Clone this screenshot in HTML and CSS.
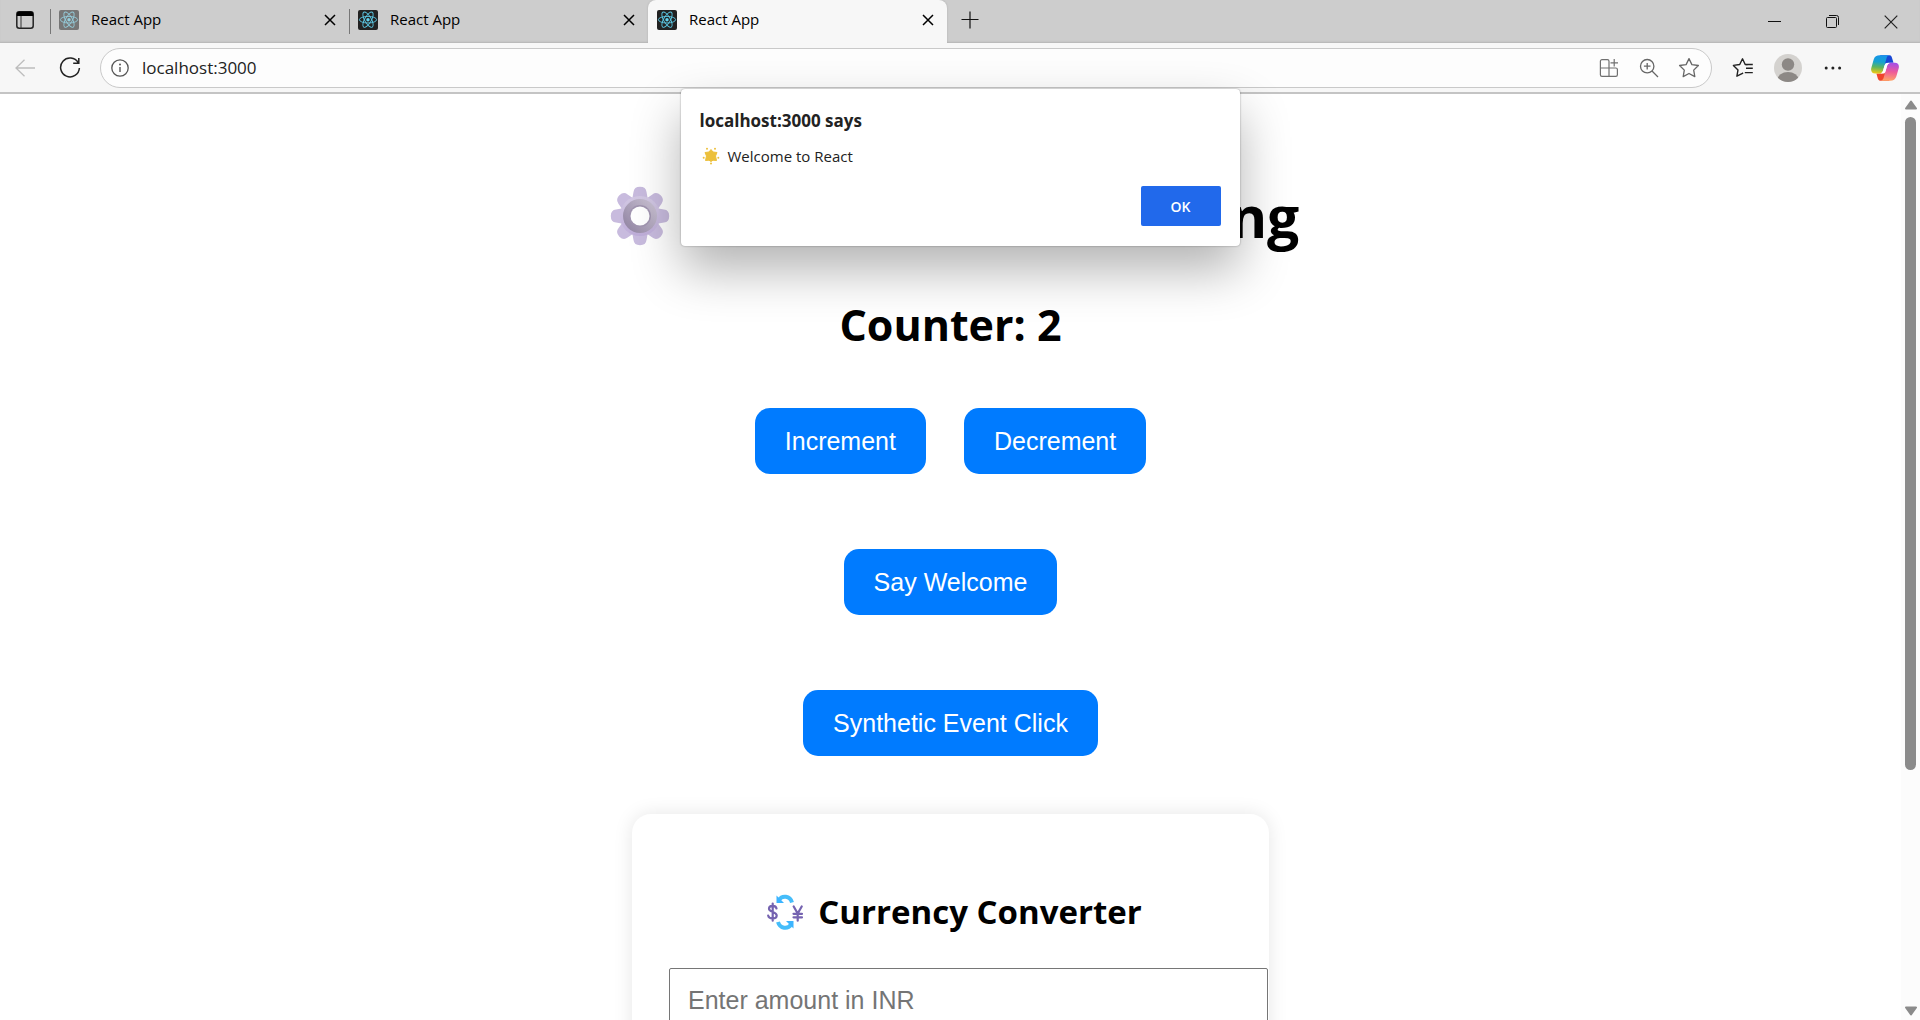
FILE: index.html
```html
<!DOCTYPE html>
<html lang="en">
<head>
<meta charset="utf-8">
<title>React App</title>
<link rel="stylesheet" href="styles.css">
</head>
<body>
<svg class="defs" aria-hidden="true">
  <symbol id="react" viewBox="0 0 20 20">
    <rect class="react-bg" width="20" height="20" rx="2"/>
    <g fill="none" stroke="#5cc8e4" stroke-width="0.9">
      <ellipse cx="10" cy="9.7" rx="8.6" ry="3.3"/>
      <ellipse cx="10" cy="9.7" rx="8.6" ry="3.3" transform="rotate(60 10 9.7)"/>
      <ellipse cx="10" cy="9.7" rx="8.6" ry="3.3" transform="rotate(120 10 9.7)"/>
    </g>
    <circle cx="10" cy="9.7" r="1.7" fill="#5fd3f0"/>
  </symbol>
  <symbol id="close" viewBox="0 0 12 12"><path d="M1 1l10 10M11 1L1 11" fill="none" stroke="currentColor" stroke-width="1.5"/></symbol>
</svg>

<header class="browser">
  <div class="tabstrip">
    <button class="icon-btn workspace" aria-label="Tab actions">
      <svg width="18" height="18" viewBox="0 0 18 18"><rect x="0.8" y="0.8" width="16.4" height="16.4" rx="2.5" fill="none" stroke="#222" stroke-width="1.5"/><path d="M0.8 5V3a2.4 2.4 0 0 1 2.4-2.4h11.6A2.4 2.4 0 0 1 17.2 3v2z" fill="#000"/><path d="M5 5v12" stroke="#333" stroke-width="1"/></svg>
    </button>
    <div class="tabs">
      <div class="tab sleeping"><svg class="favicon"><use href="#react"/></svg><span>React App</span><button class="icon-btn" aria-label="Close tab"><svg width="12" height="12"><use href="#close"/></svg></button></div>
      <div class="tab"><svg class="favicon"><use href="#react"/></svg><span>React App</span><button class="icon-btn" aria-label="Close tab"><svg width="12" height="12"><use href="#close"/></svg></button></div>
      <div class="tab active"><svg class="favicon"><use href="#react"/></svg><span>React App</span><button class="icon-btn" aria-label="Close tab"><svg width="12" height="12"><use href="#close"/></svg></button></div>
    </div>
    <button class="icon-btn new-tab" aria-label="New tab"><svg width="18" height="18" viewBox="0 0 18 18"><path d="M9 0.500v17M0.500 8.500h17" stroke="#111" stroke-width="1.200"/></svg></button>
    <div class="window-controls">
      <button class="icon-btn" aria-label="Minimize"><svg width="14" height="14" viewBox="0 0 14 14"><path d="M0 6.500h13" stroke="#111"/></svg></button>
      <button class="icon-btn" aria-label="Restore"><svg width="14" height="14" viewBox="0 0 14 14"><g fill="none" stroke="#111"><rect x="0.500" y="2.500" width="10" height="10" rx="1"/><path d="M3 0.500h7.500a2 2 0 0 1 2 2V10"/></g></svg></button>
      <button class="icon-btn" aria-label="Close window"><svg width="14" height="14" viewBox="0 0 14 14"><path d="M0.700 0.700l12.600 12.600M13.300 0.700L0.700 13.300" stroke="#222" stroke-width="1.200"/></svg></button>
    </div>
  </div>

  <div class="toolbar">
    <button class="icon-btn back" aria-label="Back" disabled><svg width="20" height="18" viewBox="0 0 20 18"><path d="M20 9H1M9.500 0.700L1 9l8.500 8.300" fill="none" stroke="#bdbdbd" stroke-width="1.300"/></svg></button>
    <button class="icon-btn reload" aria-label="Refresh"><svg width="22" height="22" viewBox="0 0 22 22"><path d="M19.200 5.800A9.400 9.400 0 1 0 20.400 11M19.800 1v5.200h-5.600" fill="none" stroke="#222" stroke-width="1.500"/></svg></button>
    <div class="address">
      <svg width="18" height="18" viewBox="0 0 18 18"><circle cx="9" cy="9" r="8.200" fill="none" stroke="#555" stroke-width="1.300"/><path d="M9 8v5" stroke="#555" stroke-width="1.400"/><circle cx="9" cy="5.500" r="1" fill="#555"/></svg>
      <input class="url" type="text" aria-label="Address" value="localhost:3000">
      <button class="icon-btn" aria-label="Install app"><svg width="20" height="20" viewBox="0 0 20 20"><g fill="none" stroke="#707070" stroke-width="1.200"><path d="M10 18.400H3a1.600 1.600 0 0 1-1.600-1.600V3.200A1.600 1.600 0 0 1 3 1.600h5.400A1.600 1.600 0 0 1 10 3.200zM1.400 10h15.400a1.600 1.600 0 0 1 1.600 1.600v5.200a1.600 1.600 0 0 1-1.600 1.600H10M15.200 1v7.600M11.500 4.800h7.500"/></g></svg></button>
      <button class="icon-btn" aria-label="Zoom"><svg width="20" height="20" viewBox="0 0 20 20"><g fill="none" stroke="#666" stroke-width="1.300"><circle cx="8.200" cy="8.200" r="6.700"/><path d="M13 13l6 6M8.200 4.900v6.600M4.900 8.200h6.600"/></g></svg></button>
      <button class="icon-btn" aria-label="Add to favorites"><svg width="22" height="22" viewBox="0 0 22 22"><path d="M11 1.600l2.900 6 6.500.9-4.700 4.600 1.100 6.500L11 16.500l-5.800 3.100 1.100-6.500L1.600 8.500l6.500-.9z" fill="none" stroke="#666" stroke-width="1.300" stroke-linejoin="round"/></svg></button>
    </div>
    <div class="tools">
      <button class="icon-btn" aria-label="Favorites"><svg width="22" height="22" viewBox="0 0 22 22"><path d="M15.500 7.800L13.200 7.500 10.500 1.800 7.700 7.500l-6.300.9 4.600 4.500-1.100 6.300 5.600-2.900.6-.4M13 7.500h7.800M14 11.200h6.800M12.800 15.600h8" fill="none" stroke="#222" stroke-width="1.400" stroke-linejoin="round"/></svg></button>
      <button class="icon-btn" aria-label="Profile"><svg width="28" height="28" viewBox="0 0 28 28"><defs><clipPath id="face"><circle cx="14" cy="14" r="14"/></clipPath></defs><circle cx="14" cy="14" r="14" fill="#d4d2cf"/><g fill="#8c8885" clip-path="url(#face)"><circle cx="14" cy="10.500" r="6.200"/><ellipse cx="14" cy="25.500" rx="10.500" ry="7.500"/></g></svg></button>
      <button class="icon-btn" aria-label="Settings and more"><svg width="18" height="4" viewBox="0 0 18 4"><g fill="#222"><circle cx="2.200" cy="2" r="1.500"/><circle cx="8.900" cy="2" r="1.500"/><circle cx="15.600" cy="2" r="1.500"/></g></svg></button>
      <button class="icon-btn copilot" aria-label="Copilot"><svg width="28" height="26" viewBox="0 0 28 26">
        <defs>
          <linearGradient id="cpA" x1="0.400" y1="0" x2="0.300" y2="1"><stop offset="0" stop-color="#1795ea"/><stop offset="0.350" stop-color="#16a2d0"/><stop offset="0.650" stop-color="#5db55e"/><stop offset="1" stop-color="#f2c811"/></linearGradient>
          <linearGradient id="cpB" x1="0.600" y1="0" x2="0.500" y2="1"><stop offset="0" stop-color="#a24ee8"/><stop offset="0.500" stop-color="#ee5a9a"/><stop offset="1" stop-color="#ffa468"/></linearGradient>
        </defs>
        <path d="M9 0.300h9.500c1.800 0 2.200 1.500 2.700 3.200l1.300 4.300h-5.200c-2 0-3 1.200-3.700 3z" fill="#1947d4"/>
        <path d="M18.500 25.700H9.300c-1.700 0-2.200-1.300-2.700-2.900L5.400 18.500h4.800c2 0 3-1.200 3.600-3z" fill="#f0442c"/>
        <path d="M8.800 0.300h9.400c-1.600.3-2.200 1.500-2.800 3.400L12.200 15c-.6 2-1.600 3.500-4 3.500H4.300c-3.300 0-4.800-2.400-4-5.600l2.400-8.400C3.600 1.700 5.600.3 8.800.3z" fill="url(#cpA)"/>
        <path d="M19.200 25.700H10c1.500-.3 2.200-1.500 2.700-3.200L15.900 11.200c.6-2 1.700-3.400 4-3.400h3.900c3.200 0 4.700 2.300 3.900 5.400l-2.400 8.300c-.9 2.800-2.900 4.200-6.100 4.200z" fill="url(#cpB)"/>
        <path d="M15.900 8h3.100c-1.700.5-2.600 1.700-3.100 3.400l-1.600 5.500c-.4 1-1 1.600-2.300 1.600H9.600c1.400-.5 2.100-1.700 2.600-3.300l1.500-5.200c.4-1.200 1-2 2.200-2z" fill="#fff"/>
      </svg></button>
    </div>
  </div>
</header>

<div class="viewport">
  <main class="page">
    <h1><svg class="gear" viewBox="0 0 60 60" aria-hidden="true">
      <defs>
        <linearGradient id="gearBody" gradientUnits="userSpaceOnUse" x1="33" y1="0" x2="27" y2="60"><stop offset="0" stop-color="#d8d0e6"/><stop offset="1" stop-color="#b9a6d6"/></linearGradient>
        <linearGradient id="gearRing" x1="1" y1="0.100" x2="0" y2="0.900"><stop offset="0" stop-color="#cdc5d6"/><stop offset="1" stop-color="#8f82a0"/></linearGradient>
        <path id="tooth" d="M21 20L23.500 6Q24 .8 30 .8T36.500 6l2.500 14z"/>
      </defs>
      <g fill="#c8bbde">
        <use href="#tooth"/><use href="#tooth" transform="rotate(45 30 30)"/><use href="#tooth" transform="rotate(90 30 30)"/><use href="#tooth" transform="rotate(135 30 30)"/><use href="#tooth" transform="rotate(180 30 30)"/><use href="#tooth" transform="rotate(225 30 30)"/><use href="#tooth" transform="rotate(270 30 30)"/><use href="#tooth" transform="rotate(315 30 30)"/>
      </g>
      <circle cx="30" cy="30" r="20" fill="url(#gearBody)"/>
      <circle cx="30" cy="30" r="17" fill="url(#gearRing)"/>
      <circle cx="30" cy="30" r="11" fill="#a195b0"/>
      <circle cx="30" cy="30" r="9.500" fill="#fff"/>
    </svg>React Event Handling</h1>
    <h2>Counter: 2</h2>
    <div class="actions">
      <button class="btn">Increment</button>
      <button class="btn">Decrement</button>
    </div>
    <div class="actions"><button class="btn">Say Welcome</button></div>
    <div class="actions"><button class="btn">Synthetic Event Click</button></div>
    <section class="card">
      <h3><svg class="exchange" viewBox="0 0 36 36" aria-hidden="true">
        <g fill="none" stroke="#45bdfa" stroke-width="4">
          <path d="M25 8.500C23 1.500 15 1 12 6"/>
          <path d="M11 28c2 7 10 7.500 13 2.500"/>
        </g>
        <path d="M9.500 1.500v7.500h7.500z" fill="#3cb4ff"/><path d="M26.500 34.500V27H19z" fill="#3cb4ff"/>
        <g fill="none" stroke="#7563b0" stroke-width="2.200" stroke-linecap="round">
          <path d="M9.500 14.500C8.800 11 2 11 2 14.800c0 3.700 7.700 2.600 7.700 6.700 0 4-7.700 4-8.500.1M5.700 9.500v17.200"/>
          <path d="M26.700 12.500l4 7 4-7M30.700 19.500v7.200M26.500 19.800h8.500M26.500 23.300h8.500"/>
        </g>
      </svg>Currency Converter</h3>
      <input class="amount" type="number" placeholder="Enter amount in INR" aria-label="Amount in INR">
    </section>
  </main>
  <div class="scrollbar" aria-hidden="true">
    <svg width="12" height="10" viewBox="0 0 12 10"><path d="M6 1.500L11 8.500H1z" fill="#8b8b8b" stroke="#8b8b8b" stroke-width="2" stroke-linejoin="round"/></svg>
    <div class="track"><div class="thumb"></div></div>
    <svg width="12" height="10" viewBox="0 0 12 10"><path d="M6 8.500L11 1.500H1z" fill="#8b8b8b" stroke="#8b8b8b" stroke-width="2" stroke-linejoin="round"/></svg>
  </div>
</div>

<div class="alert" role="alertdialog" aria-labelledby="alert-title" aria-describedby="alert-text">
  <p class="alert-title" id="alert-title">localhost:3000 says</p>
  <p class="alert-text" id="alert-text"><svg width="18" height="18" viewBox="0 0 18 18" aria-hidden="true"><g fill="#ecc03c"><path d="M9 2.500l2 2.500 4 .5-1.500 3.500 1 4.500-3.500-.3L9 14.500l-2-1.300-3.500.3L4.500 9 3 5.500 7 5z" stroke="#ecc03c" stroke-linejoin="round"/><circle cx="5" cy="1.700" r="1"/><circle cx="13" cy="1.700" r="1"/><circle cx="1.700" cy="10.800" r="1"/><circle cx="16.300" cy="10.800" r="1"/><circle cx="9" cy="16.600" r="1"/></g></svg>Welcome to React</p>
  <div class="alert-actions"><button class="ok">OK</button></div>
</div>
</body>
</html>
```
FILE: styles.css
```css
* { box-sizing: border-box; }

body {
  margin: 0;
  height: 100vh;
  display: flex;
  flex-direction: column;
  overflow: hidden;
  background: #fff;
  color: #000;
  font-family: "Open Sans", "Noto Sans", sans-serif;
}

button, input { font: inherit; color: inherit; }
svg { display: block; flex: none; }
.defs { position: absolute; width: 0; height: 0; }

.icon-btn {
  display: flex;
  align-items: center;
  justify-content: center;
  flex: none;
  padding: 0;
  border: 0;
  background: none;
}

/* Browser frame */
.tabstrip {
  display: flex;
  height: 43px;
  background: #cdcdcd;
  box-shadow: inset 0 -2px 2px -1px #b4b4b4;
}
.workspace { width: 50px; height: 40px; }
.tabs { display: flex; flex: 0 1 897px; }
.tab {
  flex: 1;
  display: flex;
  align-items: center;
  gap: 12px;
  height: 40px;
  padding: 0 13px 0 9px;
  background: linear-gradient(#777, #777) 0 9px / 1px 25px no-repeat;
}
.tab span { flex: 1; padding-bottom: 2px; font-size: 15px; line-height: 20px; }
.favicon { width: 20px; height: 20px; }
.react-bg { fill: #222; }
.sleeping .favicon { opacity: 0.5; }
.tab.active {
  height: 43px;
  padding-bottom: 3px;
  background: #f7f7f7;
  border-radius: 8px 8px 0 0;
  box-shadow: 0 0 2px #aaa;
  clip-path: inset(0 -3px 0 -3px);
}
.new-tab { width: 45px; height: 40px; }
.window-controls { display: flex; margin-left: auto; height: 43px; }
.window-controls .icon-btn { width: 58px; }

.toolbar {
  display: flex;
  align-items: center;
  height: 51px;
  background: #f7f7f7;
  border-bottom: 2px solid #c4c4c4;
}
.back { width: 50px; }
.reload { width: 40px; }
.address {
  flex: 1;
  display: flex;
  align-items: center;
  height: 40px;
  margin-left: 10px;
  padding: 0 2px 0 10px;
  background: #fdfdfd;
  border: 1px solid #c9c9c9;
  border-radius: 20px;
}
.address .icon-btn { width: 40px; }
.url {
  flex: 1;
  min-width: 0;
  padding: 0;
  margin-left: 13px;
  border: 0;
  background: none;
  color: #222;
  font-size: 17px;
}
.tools { display: flex; align-items: center; padding: 0 5px 0 8px; }
.tools .icon-btn { width: 45px; height: 40px; }
.tools .copilot { width: 60px; }

/* Page */
.viewport { flex: 1; display: flex; min-height: 0; }
.page {
  flex: 1;
  overflow: hidden;
  display: flex;
  flex-direction: column;
  align-items: center;
  padding-top: 80px;
}
h1, h2, h3 { margin: 0; font-weight: 700; flex: none; }
h1 { display: flex; align-items: center; gap: 24px; font-size: 57px; line-height: 84px; white-space: nowrap; }
h2 { margin: 37px 0 53px; font-size: 43px; line-height: 60px; }
h3 { display: flex; align-items: center; justify-content: center; gap: 15px; margin-bottom: 32px; font-size: 33px; line-height: 48px; }
.gear { width: 60px; height: 60px; margin-left: 8px; }
.exchange { width: 36px; height: 36px; margin-left: 8px; }

.actions { display: flex; justify-content: center; gap: 38px; flex: none; margin-bottom: 75px; }
.btn {
  height: 66px;
  padding: 0 30px;
  border: 0;
  border-radius: 15px;
  background: #007bff;
  color: #fff;
  font-family: "Liberation Sans", Arial, sans-serif;
  font-size: 25px;
}
.actions:has(+ .card) { margin-bottom: 58px; }

.card {
  flex: none;
  width: 637px;
  padding: 74px 37px 37px;
  border-radius: 19px;
  box-shadow: 0 0 19px rgba(0, 0, 0, 0.1);
}
.amount {
  width: 599px;
  height: 64px;
  padding: 0 18px;
  border: 1px solid #767676;
  border-radius: 2px;
  background: #fff;
  font-family: "Liberation Sans", Arial, sans-serif;
  font-size: 25px;
}
.amount::placeholder { color: #757575; }

.scrollbar {
  display: flex;
  flex-direction: column;
  align-items: center;
  gap: 7px;
  width: 19px;
  padding: 6px 0 4px;
  background: #fcfcfc;
}
.track { flex: 1; width: 11px; }
.thumb { height: 74%; border-radius: 6px; background: #8b8b8b; }

/* Alert shown over the page */
.alert {
  position: absolute;
  top: 89px;
  left: 0;
  right: 0;
  width: 559px;
  margin: 0 auto;
  padding: 20px 19px;
  background: #fff;
  border-radius: 4px;
  color: #222;
  box-shadow: 0 0 2px rgba(0, 0, 0, 0.4), 0 24px 50px rgba(0, 0, 0, 0.3);
}
.alert p { margin: 0 0 11px; }
.alert-title { font-size: 17px; font-weight: 700; line-height: 24px; }
.alert-text { display: flex; align-items: center; gap: 8px; padding-left: 2px; font-size: 15px; line-height: 24px; }
.alert-actions { display: flex; justify-content: flex-end; padding-top: 7px; }
.ok {
  width: 80px;
  height: 40px;
  border: 0;
  border-radius: 2px;
  background: #2169eb;
  color: #fff;
  font-size: 14px;
  font-weight: 600;
}
```
